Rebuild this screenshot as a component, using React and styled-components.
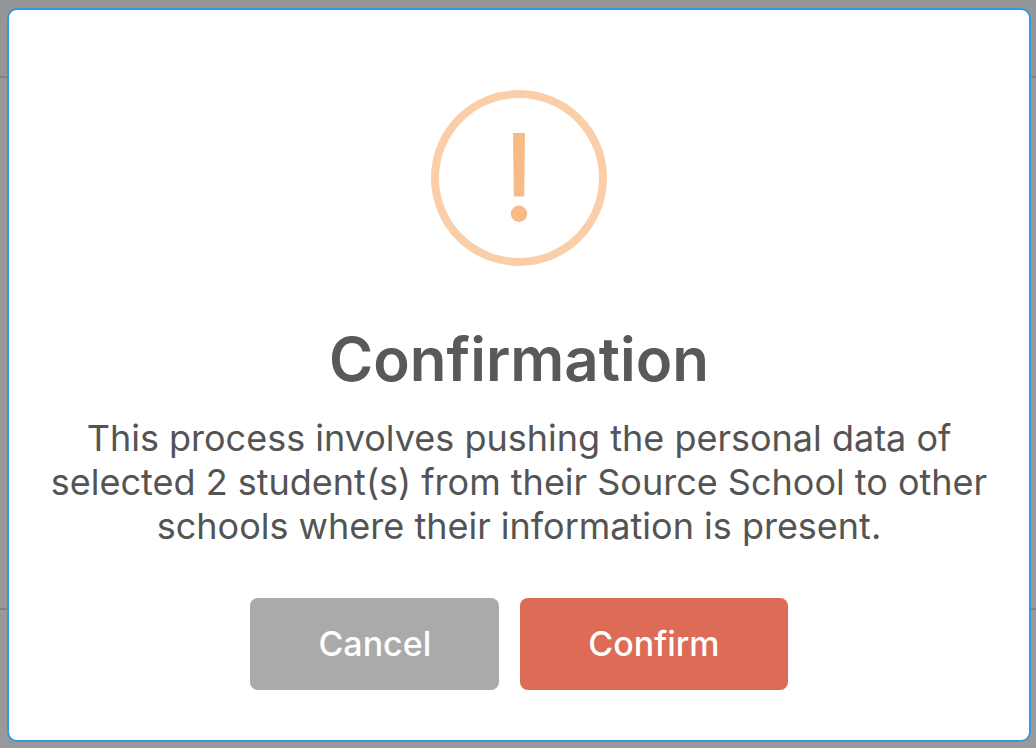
import React from "react";
import styled, { createGlobalStyle } from "styled-components";

const GlobalStyle = createGlobalStyle`
  html,
  body,
  #root {
    height: 100%;
  }
  body {
    margin: 0;
    font-family: Inter, "Liberation Sans", sans-serif;
  }
  * {
    box-sizing: border-box;
  }
`;

const Backdrop = styled.main`
  min-height: 100%;
  padding: 8px 5px 6px 7px;
  display: grid;
  background: linear-gradient(#828282, #828282) 0 76px / 100% 2px no-repeat,
    linear-gradient(#7f8187, #7f8187) 0 608px / 100% 2px no-repeat,
    linear-gradient(#959697, #959697) 0 0 / 100% 76px no-repeat,
    #999999;
`;

const Modal = styled.section`
  display: flex;
  flex-direction: column;
  align-items: center;
  padding: 80px 32px 48px;
  background: #ffffff;
  border: 2px solid #3598db;
  border-radius: 10px;
  text-align: center;
`;

const WarningIcon = styled.svg`
  width: 176px;
  height: 176px;
`;

const Title = styled.h1`
  margin: 56px 0 0;
  color: #595959;
  font-size: 60px;
  font-weight: 600;
  line-height: 74px;
`;

const Message = styled.p`
  margin: 20px 0 0;
  color: #545454;
  font-size: 36px;
  line-height: 44px;
`;

const Actions = styled.div`
  display: flex;
  gap: 21px;
  margin-top: 50px;
`;

const Button = styled.button`
  padding: 24px 68px;
  border: 0;
  border-radius: 8px;
  background: ${props => props.$color};
  color: #ffffff;
  cursor: pointer;
  font-family: inherit;
  font-size: 34px;
  font-weight: 500;
  line-height: 44px;
`;

const App = () => (
  <>
    <GlobalStyle />
    <Backdrop>
      <Modal role="dialog" aria-labelledby="title" aria-describedby="message">
        <WarningIcon viewBox="0 0 176 176" aria-hidden="true">
          <circle cx="88" cy="88" r="84" fill="none" stroke="#facea8" strokeWidth="8" />
          <path d="M82 43h12l-.8 63.5H82.8z" fill="#f8bb86" />
          <circle cx="88" cy="123.8" r="8.2" fill="#f8bb86" />
        </WarningIcon>
        <Title id="title">Confirmation</Title>
        <Message id="message">
          This process involves pushing the personal data of selected 2
          student(s) from their Source School to other schools where their
          information is present.
        </Message>
        <Actions>
          <Button type="button" $color="#aaaaaa">
            Cancel
          </Button>
          <Button type="button" $color="#de6b55">
            Confirm
          </Button>
        </Actions>
      </Modal>
    </Backdrop>
  </>
);

export default App;
